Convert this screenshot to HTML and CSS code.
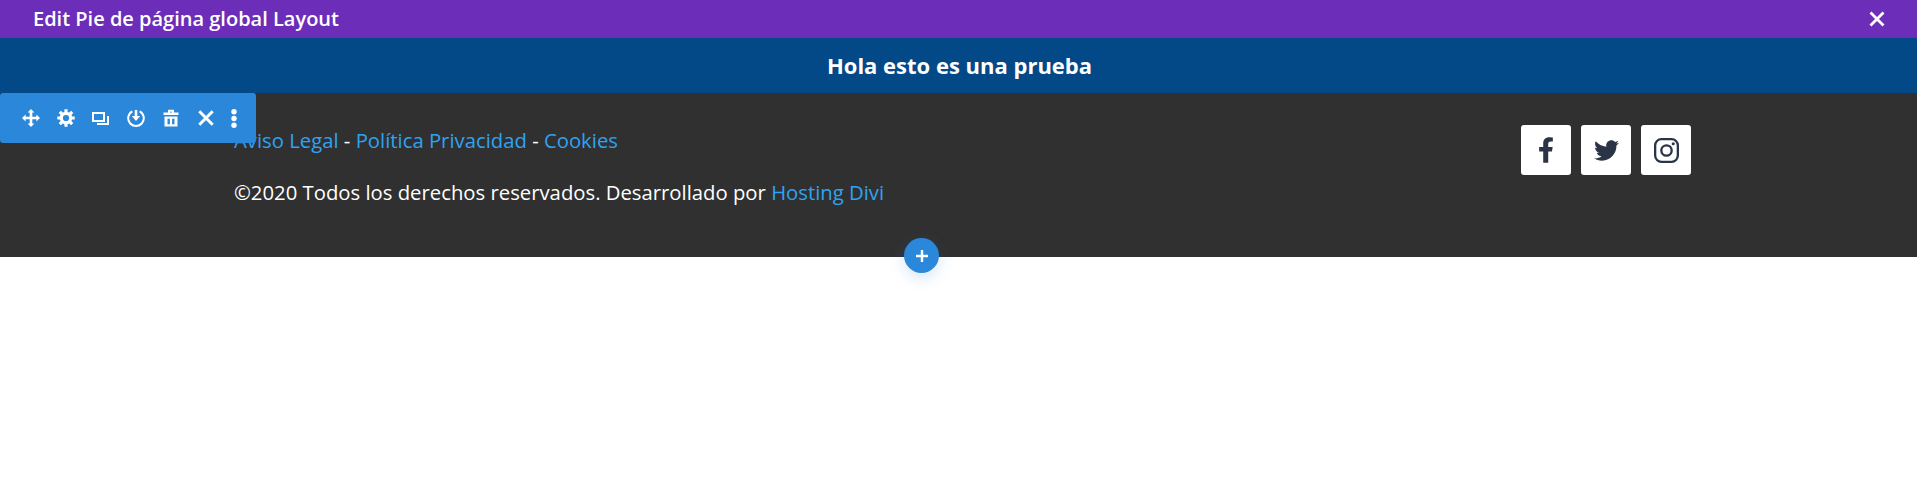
FILE: index.html
```html
<!DOCTYPE html>
<html lang="es">
<head>
<meta charset="utf-8">
<title>Edit Pie de página global Layout</title>
<link rel="stylesheet" href="styles.css">
</head>
<body>
<header class="topbar">
  <span class="topbar-title">Edit Pie de página global Layout</span>
  <svg class="topbar-close" viewBox="0 0 16 16" width="16" height="16"><path d="M1.500 1.500l13 13M14.500 1.500l-13 13" stroke="#fff" stroke-width="2.800" fill="none"/></svg>
</header>
<section class="banner">Hola esto es una prueba</section>
<footer class="footer">
  <div class="toolbar">
    <svg class="tool" viewBox="0 0 18 18"><path d="M9 0l3.400 3.600h-2.100v4.100h4.100v-2.100l3.600 3.400-3.600 3.400v-2.100h-4.100v4.100h2.100l-3.400 3.600-3.400-3.600h2.100v-4.100h-4.100v2.100l-3.600-3.400 3.600-3.400v2.100h4.100v-4.100h-2.100z" fill="#fff"/></svg>
    <svg class="tool" viewBox="0 0 18 18"><circle cx="9" cy="9" r="4.700" fill="none" stroke="#fff" stroke-width="3.200"/><path d="M9 0.300v3.500M9 14.200v3.500M0.300 9h3.500M14.200 9h3.500M2.800 2.800l2.500 2.500M12.700 12.700l2.500 2.500M15.200 2.800l-2.500 2.500M5.300 12.700l-2.500 2.500" stroke="#fff" stroke-width="3.200"/></svg>
    <svg class="tool" viewBox="0 0 18 18"><path d="M1 4h11v8h-11z" fill="none" stroke="#fff" stroke-width="2"/><path d="M16 7v8h-11" fill="none" stroke="#fff" stroke-width="2"/></svg>
    <svg class="tool" viewBox="0 0 18 18"><path d="M5.300 2.300a7.800 7.800 0 1 0 7.400 0" fill="none" stroke="#fff" stroke-width="2"/><path d="M9 1v7" stroke="#fff" stroke-width="2.600"/><path d="M4.800 7h8.400l-4.200 5z" fill="#fff"/></svg>
    <svg class="tool" viewBox="0 0 18 18"><path d="M1.500 3.600h15v2.400h-15zM6 0.800h6v2.800h-2v-0.800h-2v0.800h-2z" fill="#fff"/><path d="M2.500 7.500h13v10h-13zM5.500 9.800v5.400h2.400v-5.400zM10.100 9.800v5.400h2.400v-5.400z" fill="#fff" fill-rule="evenodd"/></svg>
    <svg class="tool" viewBox="0 0 18 18"><path d="M2.300 2.300l13.400 13.400M15.700 2.300l-13.400 13.400" stroke="#fff" stroke-width="3" fill="none"/></svg>
    <svg class="tool tool-dots" viewBox="0 0 6 19"><circle cx="3" cy="2.800" r="2.700" fill="#fff"/><circle cx="3" cy="9.500" r="2.700" fill="#fff"/><circle cx="3" cy="16.200" r="2.700" fill="#fff"/></svg>
  </div>
  <div class="footer-text">
    <p class="legal"><a href="#">Aviso Legal</a> - <a href="#">Política Privacidad</a> - <a href="#">Cookies</a></p>
    <p class="copy">©2020 Todos los derechos reservados. Desarrollado por <a href="#">Hosting Divi</a></p>
  </div>
  <div class="social">
    <a class="social-btn" href="#"><svg viewBox="0 0 320 512" width="16" height="26"><path fill="#2b3446" d="M279.140 288l14.220-92.660h-88.910v-60.130c0-25.350 12.420-50.060 52.240-50.060h40.420V6.260S260.430 0 225.360 0c-73.220 0-121.080 44.380-121.080 124.720v70.620H22.890V288h81.390v224h100.170V288z"/></svg></a>
    <a class="social-btn" href="#"><svg viewBox="0 0 512 512" width="25" height="25"><path fill="#2b3446" d="M459.370 151.716c.325 4.548.325 9.097.325 13.645 0 138.720-105.583 298.558-298.558 298.558-59.452 0-114.680-17.219-161.137-47.106 8.447.974 16.568 1.299 25.340 1.299 49.055 0 94.213-16.568 130.274-44.832-46.132-.975-84.792-31.188-98.112-72.772 6.498.974 12.995 1.624 19.818 1.624 9.421 0 18.843-1.300 27.614-3.573-48.081-9.747-84.143-51.980-84.143-102.985v-1.299c13.969 7.797 30.214 12.670 47.431 13.319-28.264-18.843-46.781-51.005-46.781-87.391 0-19.492 5.197-37.360 14.294-52.954 51.655 63.675 129.300 105.258 216.365 109.807-1.624-7.797-2.599-15.918-2.599-24.040 0-57.828 46.782-104.934 104.934-104.934 30.213 0 57.502 12.670 76.670 33.137 23.715-4.548 46.456-13.320 66.599-25.340-7.798 24.366-24.366 44.833-46.132 57.827 21.117-2.273 41.584-8.122 60.426-16.243-14.292 20.791-32.161 39.308-52.628 54.253z"/></svg></a>
    <a class="social-btn" href="#"><svg viewBox="0 0 26 26" width="25" height="25"><rect x="1.200" y="1.200" width="23.600" height="23.600" rx="6.500" fill="none" stroke="#2b3446" stroke-width="2.400"/><circle cx="13" cy="13" r="5.400" fill="none" stroke="#2b3446" stroke-width="2.400"/><circle cx="20" cy="6" r="1.600" fill="#2b3446"/></svg></a>
  </div>
  <span class="add-btn"><svg viewBox="0 0 14 14" width="14" height="14"><path d="M7 1v12M1 7h12" stroke="#fff" stroke-width="2.400"/></svg></span>
</footer>
</body>
</html>
```
FILE: styles.css
```css
* { box-sizing: border-box; }
html, body { margin: 0; padding: 0; background: #fff; height: 100%; }
body { font-family: "Open Sans", "Liberation Sans", sans-serif; color: #fff; overflow: hidden; }
a { color: #2ea3f2; text-decoration: none; }
p { margin: 0; }

.topbar {
  height: 38px;
  background: #6c2eb9;
  display: flex;
  align-items: center;
  justify-content: space-between;
  padding: 0 32px 0 33px;
}
.topbar-title { font-size: 20px; font-weight: 600; line-height: 38px; }
.topbar-close { display: block; }

.banner {
  height: 55px;
  background: #034887;
  display: flex;
  align-items: center;
  justify-content: center;
  font-size: 22px;
  font-weight: 700;
  padding: 0 0 2px 2px;
}

.footer {
  position: relative;
  height: 164px;
  background: #303030;
  display: flex;
  justify-content: space-between;
  padding: 32px 226px 0 234px;
  font-size: 20.3px;
}
.footer-text { line-height: 27px; padding-top: 2px; }
.legal { color: #fff; margin-bottom: 25px; }
.copy { color: #fff; }

.social { display: flex; gap: 10px; }
.social-btn {
  width: 50px;
  height: 50px;
  background: #fff;
  border-radius: 3px;
  display: flex;
  align-items: center;
  justify-content: center;
}

.toolbar {
  position: absolute;
  left: 0;
  top: 0;
  width: 256px;
  height: 50px;
  background: #2b87da;
  border-radius: 3px;
  display: flex;
  align-items: center;
  gap: 17px;
  padding: 0 0 0 22px;
}
.tool { width: 18px; height: 18px; display: block; flex: none; }
.tool-dots { width: 6px; height: 19px; margin-left: -1px; }

.add-btn {
  position: absolute;
  left: 904px;
  top: 145px;
  width: 35px;
  height: 35px;
  border-radius: 50%;
  background: #2b87da;
  box-shadow: 0 5px 15px rgba(43, 135, 218, .2);
  display: flex;
  align-items: center;
  justify-content: center;
}
```
